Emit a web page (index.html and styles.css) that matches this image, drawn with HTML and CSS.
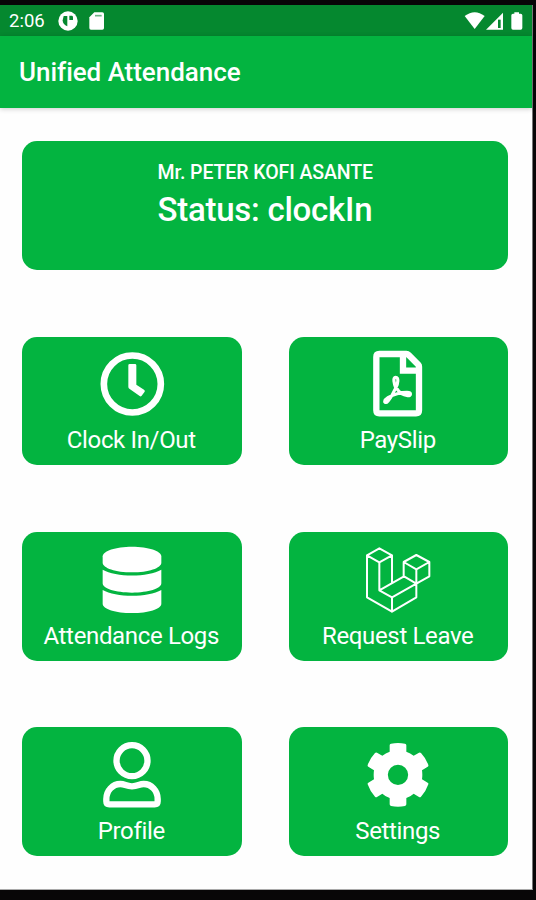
FILE: index.html
```html
<!DOCTYPE html>
<html lang="en">
<head>
<meta charset="utf-8">
<title>Unified Attendance</title>
<link rel="stylesheet" href="styles.css">
</head>
<body>
<div class="screen">
  <div class="statusbar">
    <span class="time">2:06</span>
    <svg class="notif" viewBox="174 30 144 60">
      <circle cx="204" cy="60" r="29" fill="#fff"/>
      <path d="M191 45H202V76Q188 70 188 58Z" fill="#05882f"/>
      <path d="M208 44H216Q219 45 219 49V57H208Z" fill="#05882f"/>
      <path d="M283 34H307Q312 34 312 39V81Q312 86 307 86H273Q268 86 268 81V49Z" fill="#fff"/>
      <path d="M285 44H305" stroke="#6db586" stroke-width="5"/>
    </svg>
    <svg class="signals" viewBox="190 30 180 60">
      <path d="M192 45Q222 22 252 45L222 84Z" fill="#fff"/>
      <path d="M307 35V86H256Z" fill="#fff"/>
      <path d="M292 56h8v25h-8z" fill="#05882f"/>
      <path d="M341 38V34H355V38H360Q365 38 365 43V81Q365 86 360 86H337Q332 86 332 81V43Q332 38 337 38Z" fill="#fff"/>
    </svg>
  </div>
  <header class="appbar"><h1>Unified Attendance</h1></header>
  <main class="content">
    <section class="card summary">
      <p class="name">Mr. PETER KOFI ASANTE</p>
      <p class="status">Status: clockIn</p>
    </section>
    <div class="grid">
      <div class="card tile">
        <svg class="icon" viewBox="257 54 216 216">
          <circle cx="366" cy="162" r="85.5" fill="none" stroke="#fff" stroke-width="20"/>
          <path d="M354 106Q354 102 358 102H374Q378 102 378 106V164L401 179Q405 182 403 185L394 197Q391 201 388 198L357 176Q354 174 354 170Z" fill="#fff"/>
        </svg>
        <span class="label">Clock In/Out</span>
      </div>
      <div class="card tile">
        <svg class="icon" viewBox="247 54 216 216" fill="none" stroke="#fff" stroke-linejoin="round">
          <path d="M299 72H380Q384 72 387 75L416 104Q418 106 418 110V241Q418 250 409 250H299Q290 250 290 241V81Q290 72 299 72Z" stroke-width="19"/>
          <path d="M370 72V122H418" stroke-width="19" stroke-linejoin="miter"/>
          <path d="M349 176C343 160 339 142 348 142C358 142 355 160 349 172C341 188 332 210 321 217C313 220 312 211 325 203C340 194 362 187 382 187C396 187 395 198 384 197C371 196 357 186 349 172" stroke-width="9.5"/>
        </svg>
        <span class="label">PaySlip</span>
      </div>
      <div class="card tile">
        <svg class="icon" viewBox="257 55 216 216" fill="#fff">
          <path d="M277 92C277 76 316 63 365 63S453 76 453 92V111C453 127 414 140 365 140S277 127 277 111Z"/>
          <path d="M277 132C316 155 414 155 453 132V173C453 189 414 201 365 201S277 189 277 173Z"/>
          <path d="M277 193C316 216 414 216 453 193V234C453 250 414 262 365 262S277 250 277 234Z"/>
        </svg>
        <span class="label">Attendance Logs</span>
      </div>
      <div class="card tile">
        <svg class="icon" viewBox="247 55 216 216" fill="none" stroke="#fff" stroke-width="6" stroke-linejoin="round" stroke-linecap="round">
          <path d="M299 110L262 89L299 68L337 89ZV194L337 215V258L262 215V89M337 89V172M299 194L373 152L410 174L337 215M337 258L410 215V174M410 131L372 109L410 88L449 109ZV174L449 152V109M372 109V152"/>
        </svg>
        <span class="label">Request Leave</span>
      </div>
      <div class="card tile">
        <svg class="icon" viewBox="287 56 216 216" fill="none" stroke="#fff" stroke-width="19">
          <circle cx="395" cy="121" r="46.5"/>
          <path d="M360 191C374 191 377 198 395 198S416 191 430 191C453 191 472 211 472 236V243Q472 252 463 252H327Q318 252 318 243V236C318 211 337 191 360 191Z"/>
        </svg>
        <span class="label">Profile</span>
      </div>
      <div class="card tile">
        <svg class="icon" viewBox="247 56 216 216" fill="#fff">
          <path fill-rule="evenodd" d="M330 75Q330 71 334 70Q355 66 376 70Q380 71 380 75V94Q392 98 402 106L418 97Q421 95 424 98Q439 114 446 134Q447 137 444 139L427 150Q429 163 427 177L444 187Q447 189 446 192Q439 213 424 229Q421 232 418 230L402 220Q392 229 380 233V252Q380 256 376 257Q355 261 334 257Q330 256 330 252V233Q318 229 308 220L292 230Q289 232 286 229Q271 213 264 192Q263 189 266 187L283 177Q281 163 283 150L266 139Q263 137 264 134Q271 114 286 98Q289 95 292 97L308 106Q318 98 330 94ZM355 133A30.5 30.5 0 1 0 355 194A30.5 30.5 0 1 0 355 133Z"/>
        </svg>
        <span class="label">Settings</span>
      </div>
    </div>
  </main>
</div>
</body>
</html>
```
FILE: styles.css
```css
* { box-sizing: border-box; }
body {
  margin: 0;
  height: 900px;
  padding: 4.5px 3.5px 10px 0;
  background: #080607;
  font-family: Roboto, sans-serif;
  color: #fff;
}
.screen {
  height: 885.5px;
  background: #fefefe;
  border-right: 1px solid #777;
  border-bottom: 1px solid #aaa;
}
.statusbar {
  display: flex;
  align-items: center;
  height: 31px;
  padding: 1px 9px 0 9px;
  background: #05882f;
}
.time { width: 49px; font-size: 18.5px; line-height: 30px; }
.notif { width: 48px; height: 20px; }
.signals { width: 60px; height: 20px; margin-left: auto; margin-right: -1px; }
.appbar {
  display: flex;
  align-items: center;
  height: 72px;
  padding-left: 19px;
  background: #03b440;
  box-shadow: 0 1px 5px rgba(0, 0, 0, 0.2);
}
h1 { margin: 0; font-size: 26px; font-weight: 500; line-height: 32px; letter-spacing: -0.04px; }
.content { padding: 33.7px 0 0 22px; }
.card { background: #03b440; border-radius: 15px; height: 128.6px; }
.summary { width: 486px; padding: 19px 0 0 135.5px; }
.summary p { margin: 0; white-space: nowrap; }
.name { font-size: 19.5px; font-weight: 500; line-height: 26px; letter-spacing: -0.08px; }
.status { font-size: 33px; font-weight: 500; line-height: 40px; padding-top: 4px; letter-spacing: -0.25px; }
.grid {
  display: grid;
  grid-template-columns: 219.5px 219.5px;
  column-gap: 47px;
  row-gap: 66.8px;
  margin-top: 66.8px;
}
.tile {
  display: flex;
  flex-direction: column;
  align-items: center;
  padding-top: 11.7px;
}
.icon { width: 72px; height: 72px; flex: none; }
.label {
  margin: 6px 1px 0 0;
  font-size: 24px;
  line-height: 28px;
  letter-spacing: -0.35px;
  white-space: nowrap;
}
```
